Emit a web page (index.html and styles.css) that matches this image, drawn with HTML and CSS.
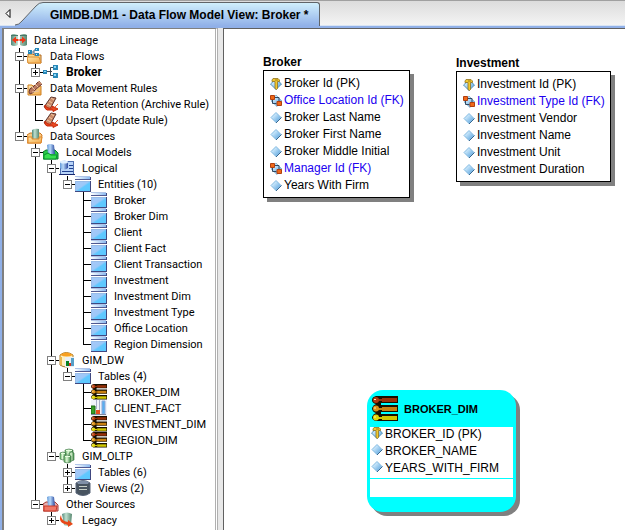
FILE: index.html
```html
<!DOCTYPE html>
<html lang="en">
<head>
<meta charset="utf-8">
<title>GIMDB.DM1 - Data Flow Model View: Broker</title>
<link rel="stylesheet" href="styles.css">
</head>
<body>
<svg class="sprite" aria-hidden="true">
  <defs>
    <linearGradient id="g-sky" x1="0" y1="0" x2="1" y2="1"><stop offset="0" stop-color="#a8c8f8"/><stop offset=".45" stop-color="#9cc8f8"/><stop offset=".55" stop-color="#60c8ff"/><stop offset="1" stop-color="#58c8ff"/></linearGradient>
    <linearGradient id="g-top" x1="0" x2="1"><stop offset="0" stop-color="#fff"/><stop offset="1" stop-color="#88b8f0"/></linearGradient>
    <linearGradient id="g-dia" x1="0" y1="0" x2="1" y2="1"><stop offset=".2" stop-color="#d8f0ff"/><stop offset="1" stop-color="#4898d8"/></linearGradient>
    <linearGradient id="g-fold" x1="0" y1="0" x2="1" y2="1"><stop offset="0" stop-color="#ffe8b0"/><stop offset="1" stop-color="#f0a848"/></linearGradient>
    <linearGradient id="g-cyl" x1="0" x2="1"><stop offset="0" stop-color="#6098d8"/><stop offset=".4" stop-color="#b8d8f8"/><stop offset="1" stop-color="#2848a0"/></linearGradient>
    <linearGradient id="g-teal" x1="0" x2="1"><stop offset="0" stop-color="#508878"/><stop offset=".4" stop-color="#c0e0d0"/><stop offset="1" stop-color="#588870"/></linearGradient>
    <linearGradient id="g-grn" x1="0" x2="1"><stop offset="0" stop-color="#58a858"/><stop offset=".4" stop-color="#e0f8d8"/><stop offset="1" stop-color="#308038"/></linearGradient>
  </defs>
  <symbol id="i-lineage" viewBox="0 0 16 16"><path d="M0 3Q3 1 7 3V13Q3 15 0 13ZM9 3Q13 1 16 3V13Q13 15 9 13Z" fill="url(#g-teal)"/><path d="M0 3.500h7M9 3.500h7" stroke="#487868"/><path d="M1 8L5 4.500V7H11V4.500L15 8L11 11.500V9H5V11.500Z" fill="#f03818"/><path d="M7.500 2h1v12h-1Z" fill="#fff"/></symbol>
  <symbol id="i-flows" viewBox="0 0 16 16"><path d="M1 6h5l1 1h7v8H1Z" fill="#f8d890" stroke="#b06820"/><path d="M0 9h12l2 6H1Z" fill="url(#g-fold)" stroke="#e09030"/><path d="M4 4h3M7 2v4h2M7 2h3" stroke="#506880" fill="none"/><path d="M1 2h4v4H1ZM8 0h4v3H8ZM8 5h4v3H8Z" fill="#2888b8"/><path d="M2 3h1v1H2ZM9 1h1v1H9ZM9 6h1v1H9Z" fill="#c8f0ff"/></symbol>
  <symbol id="i-flow" viewBox="0 0 16 16"><path d="M4 7.500h5M11 3.500H7.500v8H11" stroke="#404850" fill="none"/><path d="M0 6h4v4H0ZM10 1h5v5h-5ZM10 9h5v5h-5Z" fill="#2888b8"/><path d="M1 7h2v1H1ZM11 2h2v2h-2ZM11 10h2v2h-2Z" fill="#90d8f8"/></symbol>
  <symbol id="i-rules" viewBox="0 0 16 16"><path d="M1 5h4l1 1h8v9H1Z" fill="url(#g-fold)" stroke="#d08020"/><path d="M2 12Q2 8 6 7L12 1L15 4L8 10Q7 13 3 14Z" fill="#b87860" stroke="#6c3830"/><path d="M11 1l4 3M8 4l3 3M5 7l3 3M5 12l7-1" stroke="#e8c0a0"/></symbol>
  <symbol id="i-rule" viewBox="0 0 16 16"><path d="M1 11L8 1L13 2L7 13Z" fill="#c88868" stroke="#603830"/><path d="M8 2l3 2M6 5l3 2M4 8l4 2" stroke="#f0c8a0"/><path d="M2 9Q4 13 9 12V10L15 13L10 15.500V14H4Q1 13 2 9Z" fill="#e84820" stroke="#c82808"/><path d="M12 11l3-3" stroke="#e86030"/></symbol>
  <symbol id="i-sources" viewBox="0 0 16 16"><path d="M0 15V7L3 5H13L15 7L14 15Z" fill="#f8c880" stroke="#d07820"/><path d="M5 2Q8 0 12 1V11H5Z" fill="url(#g-teal)"/><path d="M1 9h4v2h7V9h3l-1 6H1Z" fill="url(#g-fold)" stroke="#e08828"/></symbol>
  <symbol id="i-local" viewBox="0 0 16 16"><path d="M0 15V8L3 6H12L15 9V15Z" fill="#28c848" stroke="#087828"/><path d="M4 1Q7-1 11 1L12 10H5Z" fill="url(#g-cyl)"/><path d="M1 11L5 9L8 11H14L13 15H1Z" fill="#38e050" stroke="#089030"/></symbol>
  <symbol id="i-other" viewBox="0 0 16 16"><path d="M0 15V8L3 6H12L15 9V15Z" fill="#e8b0b0" stroke="#a83830"/><path d="M4 1Q7-1 11 1L12 10H5Z" fill="url(#g-cyl)"/><path d="M1 10H14L13 15H1Z" fill="#f07868" stroke="#c83828"/></symbol>
  <symbol id="i-logical" viewBox="0 0 16 16"><path d="M1 2h14v13H1Z" fill="#b8d4f8"/><path d="M3 1.500h12M14.500 1v14M1.500 8v7" stroke="#5070b0"/><path d="M10 5.500h4M10 8.500h4M3 11.500h11" stroke="#204090"/><path d="M1 2Q5-1 9 2V8Q5 11 1 8Z" fill="url(#g-cyl)"/><ellipse cx="5" cy="2" rx="4" ry="1.500" fill="#e0f0ff"/><path d="M0 14h16v1H0Z" fill="#182870"/></symbol>
  <symbol id="i-table" viewBox="0 0 16 16"><path d="M0 0h15v4H0Z" fill="url(#g-top)"/><path d="M0 .5h15" stroke="#b0c4e8"/><path d="M0 3.500h16" stroke="#505890"/><path d="M0 5h16v11H0Z" fill="url(#g-sky)"/><path d="M.5 5v11M0 5.500h15" stroke="#98bce8"/><path d="M15.500 1v3M15.500 5v11M0 15.500h16" stroke="#404880"/></symbol>
  <symbol id="i-dw" viewBox="0 0 16 16"><path d="M1 3Q7-2 14 3V13Q7 17 1 13Z" fill="#fff0c0" stroke="#a87828"/><path d="M1 3Q7-2 14 3Q8 6 1 3Z" fill="#f8a020"/><path d="M2 5v8" stroke="#e8b850" stroke-width="2"/><path d="M6 5h9v10H6Z" fill="#e8f0f8"/><path d="M7 9h3v5H7Z" fill="#088020"/><path d="M10 11h2v3h-2Z" fill="#d83018"/><path d="M12 6h3v8h-3Z" fill="#58a0c8"/></symbol>
  <symbol id="i-oltp" viewBox="0 0 16 16"><g stroke="#488050" stroke-width=".7"><path d="M6 2Q10 0 14 2V8H6Z" fill="url(#g-grn)"/><path d="M1 5Q4 3 7 5V11Q4 13 1 11Z" fill="url(#g-grn)"/><path d="M10 5Q13 3 15 5V12Q12 14 10 12Z" fill="url(#g-grn)"/><path d="M5 8Q8 6 12 8V14Q8 16 5 14Z" fill="url(#g-grn)"/></g><path d="M6 8.500h5M2 5.500h4M7 2.500h6" stroke="#e8ffe0"/></symbol>
  <symbol id="i-views" viewBox="0 0 16 16"><path d="M1 3Q8-2 15 3V13Q8 18 1 13Z" fill="#485460" stroke="#586478"/><path d="M2 2Q8-1 14 2L13 4H3Z" fill="#8090a8"/><path d="M4 6.500h8M4 9.500h8" stroke="#c8d0c8"/></symbol>
  <symbol id="i-legacy" viewBox="0 0 16 16"><path d="M3 2Q8-1 13 2L12 13Q8 15 5 13Z" fill="url(#g-teal)"/><path d="M2 3Q2 9 9 10V8L14 12L9 15V13Q-2 11 2 3Z" fill="#e84818"/></symbol>
  <symbol id="i-fact" viewBox="0 0 16 16"><path d="M0 0h16v16H0Z" fill="#f0f4fa"/><path d="M5.500 0v9M8.500 0v11" stroke="#a8b0c8"/><path d="M0 6h4v8H0Z" fill="#38a028" stroke="#186810"/><path d="M5 10h4v4H5Z" fill="#e85020"/><path d="M11 1h3v13h-3Z" fill="#58b0f0" stroke="#90a8d8"/><path d="M0 14.500h15" stroke="#8088a0"/></symbol>
  <symbol id="i-dim" viewBox="0 0 26 26"><path d="M4 0H26V7H9V9H26V16H9V18H26V25H4Q0 24 0 21Q1 18 4 17Q0 16 0 12Q1 9 4 8Q0 7 0 4Q0 1 4 0Z" fill="#181000"/><path d="M10 2h15v4H10Z" fill="#983008"/><path d="M10 11h15v4H10Z" fill="#c88010"/><path d="M10 20h15v4H10Z" fill="#d0c800"/><path d="M5 3h5v2H5Z" fill="#983008"/><path d="M5 12h5v2H5Z" fill="#c88010"/><path d="M5 21h5v2H5Z" fill="#d0c800"/><circle cx="4" cy="4" r="3" fill="#b03810"/><circle cx="4" cy="12.500" r="3" fill="#d89018"/><circle cx="4" cy="21.500" r="3" fill="#e0d808"/><path d="M2 3h2v1H2ZM2 11.500h2v1H2ZM2 20.500h2v1H2Z" fill="#ffe8b0"/></symbol>
  <symbol id="i-attr" viewBox="0 0 12 12"><path d="M6 .5L11 5.500L6 10.500L1 5.500Z" fill="url(#g-dia)" stroke="#80b8e0"/><path d="M11.500 5.500L6 11" fill="none" stroke="#386890"/></symbol>
  <symbol id="i-pk" viewBox="0 0 12 12"><path d="M6 1L11.500 6L6 11.500L.5 6Z" fill="url(#g-dia)" stroke="#5090b8"/><path d="M3 .5h5L9.500 2V3.500H7.500V10.500L6.500 11.500L5 10.500V3.500H2V2Z" fill="#f0c830" stroke="#907420" stroke-width=".8"/><path d="M5 2h3" stroke="#806010" stroke-width=".7"/></symbol>
  <symbol id="i-fk" viewBox="0 0 12 12"><path d="M6 0L12 6L7 11.500L1 6Z" fill="url(#g-dia)" stroke="#80b0d0" stroke-width=".8"/><path d="M2.500 5v3.500h4M5 2.500h4v4" stroke="#304860" fill="none"/><path d="M.5 .5h4v4h-4ZM7 6.500h4.500v4H7Z" fill="#f06818" stroke="#b04010"/></symbol>
</svg>

<div class="app">
  <header class="tabs">
    <button class="scroll" type="button" aria-label="Previous tab"><svg width="6" height="9" viewBox="0 0 6 9"><path d="M5 .5v8L1 4.500Z" fill="#fff" stroke="#000"/></svg></button>
    <svg class="slope" width="29" height="24" viewBox="0 0 29 24" aria-hidden="true"><defs><linearGradient id="g-tab" x1="0" y1="0" x2="0" y2="1"><stop offset="0" stop-color="#d0effc"/><stop offset="1" stop-color="#90b0e8"/></linearGradient></defs><path d="M0 23Q4 23 7 19L21 4Q24 .5 28 .5H29V24H0Z" fill="url(#g-tab)"/><path d="M0 23Q4 23 7 19L21 4Q24 .5 28 .5H29" fill="none" stroke="#606468"/></svg>
    <button class="tab" type="button">GIMDB.DM1 - Data Flow Model View: Broker *</button>
  </header>
  <main class="work">
    <nav class="explorer" aria-label="Model explorer">
      <ul class="tree">
        <li><div class="row"><svg class="icon"><use href="#i-lineage"/></svg>Data Lineage</div>
          <ul class="branch">
            <li><div class="row"><button class="toggle" type="button" aria-label="Collapse Data Flows"></button><svg class="icon"><use href="#i-flows"/></svg>Data Flows</div>
              <ul class="branch">
                <li><div class="row current"><button class="toggle closed" type="button" aria-label="Expand Broker"></button><svg class="icon"><use href="#i-flow"/></svg>Broker</div></li>
              </ul>
            </li>
            <li><div class="row"><button class="toggle" type="button" aria-label="Collapse Data Movement Rules"></button><svg class="icon"><use href="#i-rules"/></svg>Data Movement Rules</div>
              <ul class="branch">
                <li><div class="row leaf"><svg class="icon"><use href="#i-rule"/></svg>Data Retention (Archive Rule)</div></li>
                <li><div class="row leaf"><svg class="icon"><use href="#i-rule"/></svg>Upsert (Update Rule)</div></li>
              </ul>
            </li>
            <li><div class="row"><button class="toggle" type="button" aria-label="Collapse Data Sources"></button><svg class="icon"><use href="#i-sources"/></svg>Data Sources</div>
              <ul class="branch">
                <li><div class="row"><button class="toggle" type="button" aria-label="Collapse Local Models"></button><svg class="icon"><use href="#i-local"/></svg>Local Models</div>
                  <ul class="branch">
                    <li><div class="row"><button class="toggle" type="button" aria-label="Collapse Logical"></button><svg class="icon"><use href="#i-logical"/></svg>Logical</div>
                      <ul class="branch">
                        <li><div class="row"><button class="toggle" type="button" aria-label="Collapse Entities"></button><svg class="icon"><use href="#i-table"/></svg>Entities (10)</div>
                          <ul class="branch">
                            <li><div class="row leaf"><svg class="icon"><use href="#i-table"/></svg>Broker</div></li>
                            <li><div class="row leaf"><svg class="icon"><use href="#i-table"/></svg>Broker Dim</div></li>
                            <li><div class="row leaf"><svg class="icon"><use href="#i-table"/></svg>Client</div></li>
                            <li><div class="row leaf"><svg class="icon"><use href="#i-table"/></svg>Client Fact</div></li>
                            <li><div class="row leaf"><svg class="icon"><use href="#i-table"/></svg>Client Transaction</div></li>
                            <li><div class="row leaf"><svg class="icon"><use href="#i-table"/></svg>Investment</div></li>
                            <li><div class="row leaf"><svg class="icon"><use href="#i-table"/></svg>Investment Dim</div></li>
                            <li><div class="row leaf"><svg class="icon"><use href="#i-table"/></svg>Investment Type</div></li>
                            <li><div class="row leaf"><svg class="icon"><use href="#i-table"/></svg>Office Location</div></li>
                            <li><div class="row leaf"><svg class="icon"><use href="#i-table"/></svg>Region Dimension</div></li>
                          </ul>
                        </li>
                      </ul>
                    </li>
                    <li><div class="row"><button class="toggle" type="button" aria-label="Collapse GIM_DW"></button><svg class="icon"><use href="#i-dw"/></svg>GIM_DW</div>
                      <ul class="branch">
                        <li><div class="row"><button class="toggle" type="button" aria-label="Collapse Tables"></button><svg class="icon"><use href="#i-table"/></svg>Tables (4)</div>
                          <ul class="branch">
                            <li><div class="row leaf"><svg class="icon"><use href="#i-dim"/></svg>BROKER_DIM</div></li>
                            <li><div class="row leaf"><svg class="icon"><use href="#i-fact"/></svg>CLIENT_FACT</div></li>
                            <li><div class="row leaf"><svg class="icon"><use href="#i-dim"/></svg>INVESTMENT_DIM</div></li>
                            <li><div class="row leaf"><svg class="icon"><use href="#i-dim"/></svg>REGION_DIM</div></li>
                          </ul>
                        </li>
                      </ul>
                    </li>
                    <li><div class="row"><button class="toggle" type="button" aria-label="Collapse GIM_OLTP"></button><svg class="icon"><use href="#i-oltp"/></svg>GIM_OLTP</div>
                      <ul class="branch">
                        <li><div class="row"><button class="toggle closed" type="button" aria-label="Expand Tables"></button><svg class="icon"><use href="#i-table"/></svg>Tables (6)</div></li>
                        <li><div class="row"><button class="toggle closed" type="button" aria-label="Expand Views"></button><svg class="icon"><use href="#i-views"/></svg>Views (2)</div></li>
                      </ul>
                    </li>
                  </ul>
                </li>
                <li><div class="row"><button class="toggle" type="button" aria-label="Collapse Other Sources"></button><svg class="icon"><use href="#i-other"/></svg>Other Sources</div>
                  <ul class="branch">
                    <li><div class="row"><button class="toggle closed" type="button" aria-label="Expand Legacy"></button><svg class="icon"><use href="#i-legacy"/></svg>Legacy</div></li>
                  </ul>
                </li>
              </ul>
            </li>
          </ul>
        </li>
      </ul>
    </nav>
    <section class="canvas" aria-label="Data flow model">
      <article class="node node-broker">
        <h2>Broker</h2>
        <ul class="box">
          <li><svg><use href="#i-pk"/></svg>Broker Id (PK)</li>
          <li class="fk"><svg><use href="#i-fk"/></svg>Office Location Id (FK)</li>
          <li><svg><use href="#i-attr"/></svg>Broker Last Name</li>
          <li><svg><use href="#i-attr"/></svg>Broker First Name</li>
          <li><svg><use href="#i-attr"/></svg>Broker Middle Initial</li>
          <li class="fk"><svg><use href="#i-fk"/></svg>Manager Id (FK)</li>
          <li><svg><use href="#i-attr"/></svg>Years With Firm</li>
        </ul>
      </article>
      <article class="node node-investment">
        <h2>Investment</h2>
        <ul class="box">
          <li><svg><use href="#i-pk"/></svg>Investment Id (PK)</li>
          <li class="fk"><svg><use href="#i-fk"/></svg>Investment Type Id (FK)</li>
          <li><svg><use href="#i-attr"/></svg>Investment Vendor</li>
          <li><svg><use href="#i-attr"/></svg>Investment Name</li>
          <li><svg><use href="#i-attr"/></svg>Investment Unit</li>
          <li><svg><use href="#i-attr"/></svg>Investment Duration</li>
        </ul>
      </article>
      <article class="node dimension">
        <h2><svg width="26" height="26"><use href="#i-dim"/></svg>BROKER_DIM</h2>
        <ul>
          <li><svg><use href="#i-pk"/></svg>BROKER_ID (PK)</li>
          <li><svg><use href="#i-attr"/></svg>BROKER_NAME</li>
          <li><svg><use href="#i-attr"/></svg>YEARS_WITH_FIRM</li>
        </ul>
        <div class="footer"></div>
      </article>
    </section>
  </main>
</div>
</body>
</html>
```
FILE: styles.css
```css
* { box-sizing: border-box; }
body { margin: 0; font-family: "Liberation Sans", Arial, sans-serif; color: #000; }
ul, h2 { margin: 0; padding: 0; list-style: none; }
button { padding: 0; border: 0; background: none; color: inherit; }
.sprite { position: absolute; width: 0; height: 0; }

.app { display: flex; flex-direction: column; height: 100vh; overflow: hidden; background: #90b0e8; }

.tabs { display: flex; align-items: flex-end; height: 26px; flex: none; border-top: 1px solid #a0a0a0; border-bottom: 1px solid #d8e4f4; background: linear-gradient(#dcdcdc, #f4f4f4); }
.scroll { width: 15px; height: 24px; display: flex; align-items: center; justify-content: center; }
.slope { flex: none; margin-bottom: -1px; }
.tab { height: 24px; margin-bottom: -1px; padding: 0 11px 0 6px; border-top: 1px solid #606468; border-right: 1px solid #606468; border-radius: 0 3px 0 0; background: linear-gradient(#d0effc, #90b0e8); font: bold 12px/22px "Liberation Sans", Arial, sans-serif; white-space: nowrap; }

.work { display: flex; flex: 1; min-height: 0; padding-top: 2px; }
.explorer { width: 216px; flex: none; margin-left: 2px; padding: 3px 0 0 7px; border: 2px solid #808080; border-width: 1px 3px 0 2px; border-right: 3px double #b0b0b0; background: #fff; overflow: hidden; }
.canvas { position: relative; flex: 1; margin-left: 5px; border-top: 1px solid #606060; border-left: 1px solid #606060; background: #fff; box-shadow: -5px 0 #e8e8e8; }

.row { position: relative; display: flex; align-items: center; height: 16px; font: 11px/17px Roboto, "Liberation Sans", sans-serif; white-space: nowrap; }
.icon { width: 16px; height: 16px; margin-right: 7px; flex: none; }
.current { font-weight: bold; font-size: 12px; }
.branch .row { padding-left: 16px; }
.branch .branch { margin-left: 16px; }
.branch > li { position: relative; }
.branch > li::before { content: ""; position: absolute; left: 8px; top: 0; bottom: 0; border-left: 1px solid #000; }
.branch > li:last-child::before { bottom: auto; height: 9px; }
.branch > li::after { content: ""; position: absolute; left: 8px; top: 8px; width: 8px; border-top: 1px solid #000; }
.toggle { position: absolute; z-index: 1; left: 4px; top: 4px; width: 9px; height: 9px; border: 1px solid #808080; background: linear-gradient(#000, #000) center / 5px 1px no-repeat, #fff; }
.closed { background: linear-gradient(#000, #000) center / 5px 1px no-repeat, linear-gradient(#000, #000) center / 1px 5px no-repeat, #fff; }

.node { position: absolute; font-size: 12px; }
.node-broker { left: 39px; top: 26px; }
.node-investment { left: 232px; top: 27px; }
.node h2 { font-size: 12px; line-height: 14px; }
.node li { display: flex; align-items: center; gap: 2px; height: 17px; line-height: 17px; white-space: nowrap; }
.node li svg { width: 12px; height: 12px; flex: none; }
.node .fk { color: #2000f0; }
.box { margin-top: 1px; padding: 4px 5px 3px 6px; border: 1px solid #000; background: #fff; box-shadow: 4px 4px #808080; }
.dimension { left: 143px; top: 361px; width: 149px; padding: 0 3px 15px 3px; border-radius: 16px; background: #00ffff; box-shadow: 4px 4px #808080; }
.dimension h2 { display: flex; align-items: center; gap: 6px; height: 37px; padding-left: 2px; font-size: 11px; }
.dimension ul { padding-left: 1px; background: #fff; }
.dimension li { align-items: flex-start; line-height: 14px; }
.footer { height: 18px; margin-top: 1px; background: #fff; }
```
